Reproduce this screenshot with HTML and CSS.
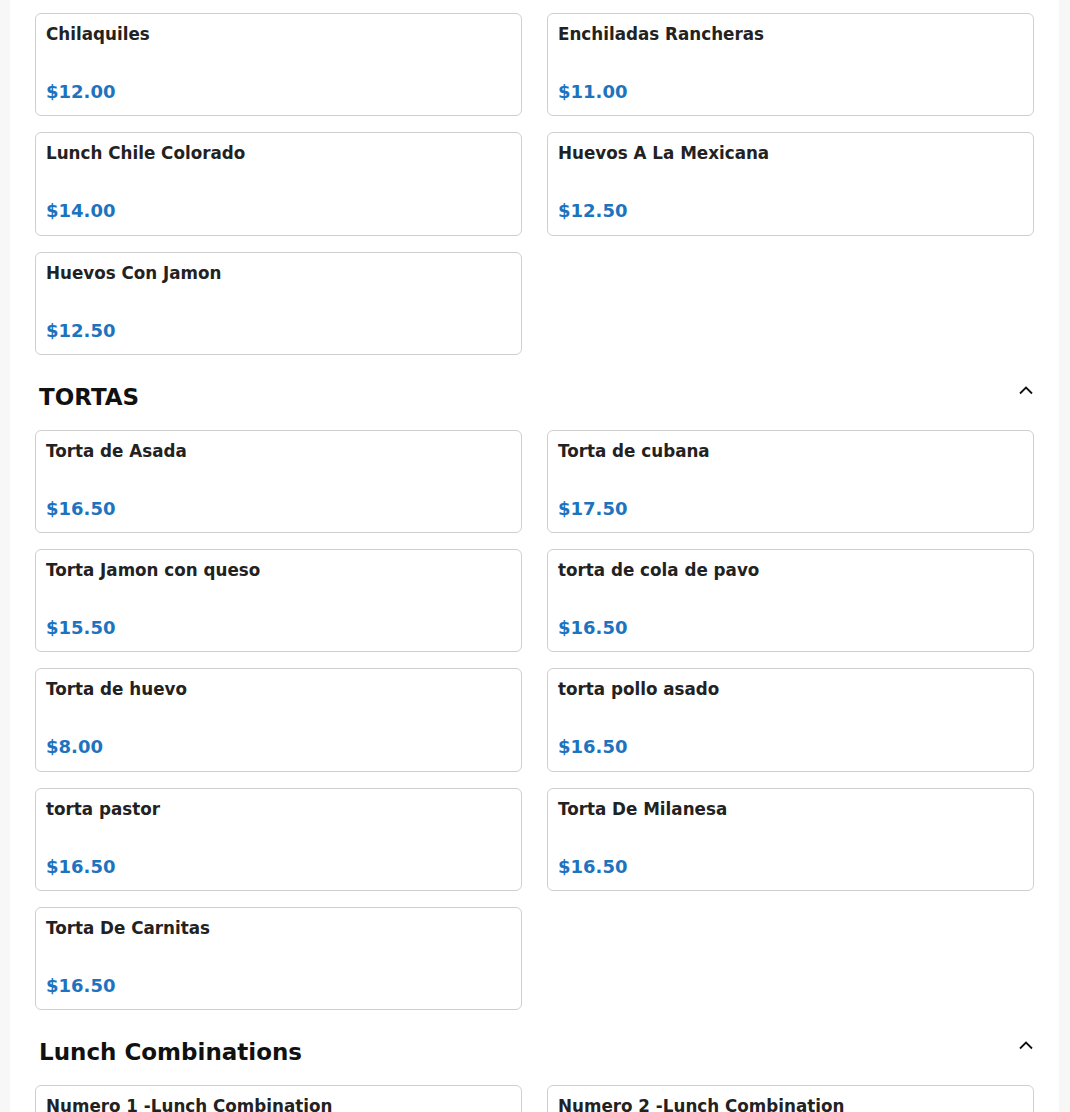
FILE: index.html
```html
<!DOCTYPE html>
<html lang="es">
<head>
<meta charset="utf-8">
<title>Menu</title>
<link rel="stylesheet" href="styles.css">
</head>
<body>
<main class="page">
  <section class="section">
    <div class="grid">
      <div class="card"><div class="name">Chilaquiles</div><div class="price">$12.00</div></div>
      <div class="card"><div class="name">Enchiladas Rancheras</div><div class="price">$11.00</div></div>
      <div class="card"><div class="name">Lunch Chile Colorado</div><div class="price">$14.00</div></div>
      <div class="card"><div class="name">Huevos A La Mexicana</div><div class="price">$12.50</div></div>
      <div class="card"><div class="name">Huevos Con Jamon</div><div class="price">$12.50</div></div>
    </div>
  </section>
  <section class="section">
    <div class="section-head">
      <h2 class="section-title">TORTAS</h2>
      <svg class="chev" width="16" height="10" viewBox="0 0 16 10"><path d="M2 8.5 L8 2.5 L14 8.5" fill="none" stroke="#111" stroke-width="1.8"/></svg>
    </div>
    <div class="grid">
      <div class="card"><div class="name">Torta de Asada</div><div class="price">$16.50</div></div>
      <div class="card"><div class="name">Torta de cubana</div><div class="price">$17.50</div></div>
      <div class="card"><div class="name">Torta Jamon con queso</div><div class="price">$15.50</div></div>
      <div class="card"><div class="name">torta de cola de pavo</div><div class="price">$16.50</div></div>
      <div class="card"><div class="name">Torta de huevo</div><div class="price">$8.00</div></div>
      <div class="card"><div class="name">torta pollo asado</div><div class="price">$16.50</div></div>
      <div class="card"><div class="name">torta pastor</div><div class="price">$16.50</div></div>
      <div class="card"><div class="name">Torta De Milanesa</div><div class="price">$16.50</div></div>
      <div class="card"><div class="name">Torta De Carnitas</div><div class="price">$16.50</div></div>
    </div>
  </section>
  <section class="section">
    <div class="section-head">
      <h2 class="section-title">Lunch Combinations</h2>
      <svg class="chev" width="16" height="10" viewBox="0 0 16 10"><path d="M2 8.5 L8 2.5 L14 8.5" fill="none" stroke="#111" stroke-width="1.8"/></svg>
    </div>
    <div class="grid">
      <div class="card"><div class="name">Numero 1 -Lunch Combination</div><div class="price">$13.00</div></div>
      <div class="card"><div class="name">Numero 2 -Lunch Combination</div><div class="price">$13.00</div></div>
    </div>
  </section>
</main>
</body>
</html>
```
FILE: styles.css
```css
html, body {
  margin: 0;
  padding: 0;
  background: #f7f7f8;
  font-family: "DejaVu Sans", "Liberation Sans", sans-serif;
  color: #222;
}
.page {
  margin: 0 11px 0 10px;
  background: #fff;
  padding: 13px 25px 20px 25px;
}
.grid {
  display: grid;
  grid-template-columns: 1fr 1fr;
  column-gap: 25px;
  row-gap: 16px;
}
.card {
  border: 1px solid #cfcfcf;
  border-radius: 6px;
  padding: 10px 10px 12.25px 10px;
  display: flex;
  flex-direction: column;
  gap: 37px;
  background: #fff;
}
.name {
  font-size: 16.75px;
  line-height: 20px;
  font-weight: bold;
  color: #222;
}
.price {
  font-size: 18px;
  line-height: 22px;
  font-weight: bold;
  color: #1e73be;
}
.section-head {
  display: flex;
  align-items: center;
  justify-content: space-between;
  padding: 28px 0 19px 4px;
}
.section-title {
  margin: 0;
  font-size: 23px;
  line-height: 28px;
  font-weight: bold;
  color: #111;
}
.chev {
  display: block;
  margin-top: -14px;
}
```
